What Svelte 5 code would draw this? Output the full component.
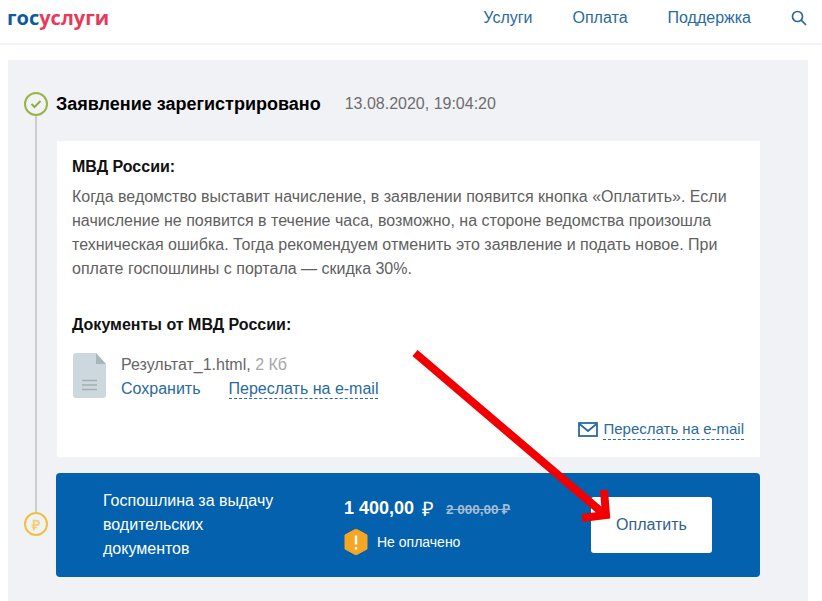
<script>
	const paragraphs = "Когда ведомство выставит начисление, в заявлении появится кнопка «Оплатить». Если начисление не появится в течение часа, возможно, на стороне ведомства произошла техническая ошибка. Тогда рекомендуем отменить это заявление и подать новое. При оплате госпошлины с портала — скидка 30%.";
	const nav = ["Услуги", "Оплата", "Поддержка"];
</script>

<div class="page">
	<header>
		<div class="logo"><span class="gos">гос</span><span class="usl">услуги</span></div>
		<nav>
			{#each nav as item}
				<span>{item}</span>
			{/each}
			<svg width="16" height="16" viewBox="0 0 16 16" fill="none" stroke="#2a6a9e" stroke-width="1.7">
				<circle cx="6.5" cy="6.5" r="5" />
				<path d="M10.2 10.2 15 15" />
			</svg>
		</nav>
	</header>

	<main>
		<div class="status">
			<div class="marker green">
				<svg width="12" height="10" viewBox="0 0 12 10" fill="none" stroke="#8fae3c" stroke-width="2">
					<path d="M1.5 5 4.5 8 10.5 2" />
				</svg>
			</div>
			<h2>Заявление зарегистрировано</h2>
			<time>13.08.2020, 19:04:20</time>
		</div>

		<div class="line-wrap">
			<section class="card">
				<h3>МВД России:</h3>
				<p>{paragraphs}</p>
				<h3 class="docs">Документы от МВД России:</h3>
				<div class="file">
					<svg class="file-icon" width="33" height="45" viewBox="0 0 33 45">
						<path d="M3 0h20l10 11v31a3 3 0 0 1-3 3H3a3 3 0 0 1-3-3V3a3 3 0 0 1 3-3z" fill="#ccd8dd" />
						<path d="M23 0l10 11H23z" fill="#a9b7bb" />
						<path d="M9 27.500h15M9 32h15M9 36.500h15" stroke="#a3aeb3" stroke-width="1.6" />
					</svg>
					<div class="file-info">
						<div><span class="fname">Результат_1.html,</span> <span class="fsize">2 Кб</span></div>
						<div class="links">
							<span class="link">Сохранить</span>
							<span class="link dashed">Переслать на e-mail</span>
						</div>
					</div>
				</div>
				<div class="forward">
					<svg width="20" height="15" viewBox="0 0 20 15" fill="none" stroke="#2a6a9e" stroke-width="1.8">
						<rect x="1" y="1" width="18" height="13" />
						<path d="M1 1.500 10 9l9-7.500" />
					</svg>
					<span class="link dashed small">Переслать на e-mail</span>
				</div>
			</section>
		</div>

		<section class="payment">
			<div class="marker yellow"><span>₽</span></div>
			<div class="title">Госпошлина за выдачу водительских документов</div>
			<div class="sums">
				<div class="amounts">
					<b>1 400,00</b>
					<span class="rub">₽</span>
					<s>2 000,00 ₽</s>
				</div>
				<div class="state">
					<svg width="24" height="26" viewBox="0 0 24 26">
						<path d="M12 0 23 6v14l-11 6L1 20V6z" fill="#f5a623" stroke="#f5a623" stroke-linejoin="round" stroke-width="1" />
						<path d="M12 6.500v9M12 18v2.500" stroke="#fff" stroke-width="2.400" />
					</svg>
					<span>Не оплачено</span>
				</div>
			</div>
			<button>Оплатить</button>
		</section>
	</main>

	<svg class="arrow" width="822" height="601" viewBox="0 0 822 601" fill="none" stroke="#f00000">
		<path d="M415 353 604 514" stroke-width="8" />
		<path d="M604 490 606 515 582 518" stroke-width="8" />
	</svg>
</div>

<style>
	:global(body) {
		margin: 0;
		background: #fff;
		font-family: "Liberation Sans", Arial, sans-serif;
	}

	.page {
		position: relative;
		width: 822px;
		height: 601px;
		overflow: hidden;
	}

	header {
		height: 43px;
		border-bottom: 2px solid #f4f4f6;
		display: flex;
		justify-content: space-between;
		align-items: center;
	}

	.logo {
		margin: -8px 0 0 7px;
		font-family: "Open Sans", sans-serif;
		font-weight: 700;
		font-size: 20px;
		line-height: 26px;
	}

	.gos {
		color: #0b5c9e;
	}

	.usl {
		color: #e8395b;
	}

	nav {
		display: flex;
		align-items: center;
		gap: 40px;
		margin: -8px 15px 0 0;
		font-size: 16px;
		color: #2a6a9e;
	}

	main {
		margin: 15px 14px 0 8px;
		padding: 29px 48px 0 48px;
		height: 600px;
		background: #f1f2f6;
		position: relative;
	}

	.status {
		display: flex;
		align-items: center;
		height: 30px;
		position: relative;
	}

	.marker {
		position: absolute;
		left: -32px;
		width: 20px;
		height: 20px;
		border-radius: 50%;
		border: 2px solid;
		background: #f1f2f6;
		display: flex;
		align-items: center;
		justify-content: center;
		z-index: 1;
	}

	.green {
		border-color: #98b445;
		top: 3px;
	}

	.yellow {
		border-color: #f0c040;
		top: 39px;
		color: #f3cf70;
		font-size: 14px;
		font-weight: 700;
	}

	h2 {
		margin: 0;
		font-size: 18px;
		line-height: 30px;
		font-weight: 700;
		color: #000;
	}

	time {
		margin-left: 24px;
		font-size: 16px;
		color: #6d6d6d;
	}

	.line-wrap {
		position: relative;
		margin-top: 22px;
	}

	.line-wrap::before {
		content: "";
		position: absolute;
		left: -21px;
		top: -25px;
		height: 396px;
		width: 2px;
		background: #c9ccd0;
	}

	.card {
		margin-left: 1px;
		background: #fff;
		height: 316px;
		box-sizing: border-box;
		padding: 15px 16px 0 15px;
		position: relative;
	}

	h3 {
		margin: 0;
		font-size: 16px;
		line-height: 22px;
		font-weight: 700;
		color: #111;
	}

	p {
		margin: 7px 0 0;
		font-size: 16px;
		line-height: 24px;
		color: #5f5f5f;
	}

	.docs {
		margin-top: 33px;
	}

	.file {
		display: flex;
		gap: 15px;
		margin-top: 18px;
		font-size: 16px;
		line-height: 24px;
		margin-left: 1px;
	}

	.file-icon {
		margin-top: -1px;
	}

	.file-info {
		margin-top: -1px;
	}

	.fname {
		color: #666;
	}

	.fsize {
		color: #a6a6a6;
	}

	.links {
		display: flex;
		gap: 28px;
	}

	.link {
		color: #2a6a9e;
	}

	.dashed {
		border-bottom: 1px dashed #2a6a9e;
		line-height: 20px;
		height: 19px;
		margin-top: 2px;
	}

	.forward {
		display: flex;
		align-items: center;
		gap: 5px;
		position: absolute;
		right: 16px;
		bottom: 17px;
	}

	.small {
		font-size: 15px;
		margin-top: 0;
		height: 20px;
	}

	.payment {
		position: relative;
		margin-top: 16px;
		height: 104px;
		background: #0461ad;
		border-radius: 4px;
		display: flex;
		align-items: center;
		color: #fff;
	}

	.payment .title {
		width: 195px;
		margin-left: 47px;
		padding-right: 20px;
		box-sizing: border-box;
		font-size: 16px;
		line-height: 24px;
	}

	.sums {
		margin-left: 46px;
		width: 247px;
		margin-top: 1px;
	}

	.amounts {
		display: flex;
		align-items: center;
		height: 30px;
		margin-top: -3px;
	}

	.amounts b {
		font-size: 18px;
	}

	.rub {
		font-size: 20px;
		margin-left: 8px;
	}

	s {
		margin-left: 12px;
		font-size: 13.500px;
		font-weight: 700;
		color: #a5bdd3;
	}

	.state {
		display: flex;
		align-items: center;
		gap: 9px;
		margin-top: 5px;
		font-size: 14px;
	}

	button {
		width: 121px;
		height: 56px;
		background: #fff;
		border: 0;
		border-radius: 3px;
		font: 16px "Liberation Sans", Arial, sans-serif;
		color: #2f5f8f;
		padding: 0;
	}

	.arrow {
		position: absolute;
		left: 0;
		top: 0;
		pointer-events: none;
	}
</style>
